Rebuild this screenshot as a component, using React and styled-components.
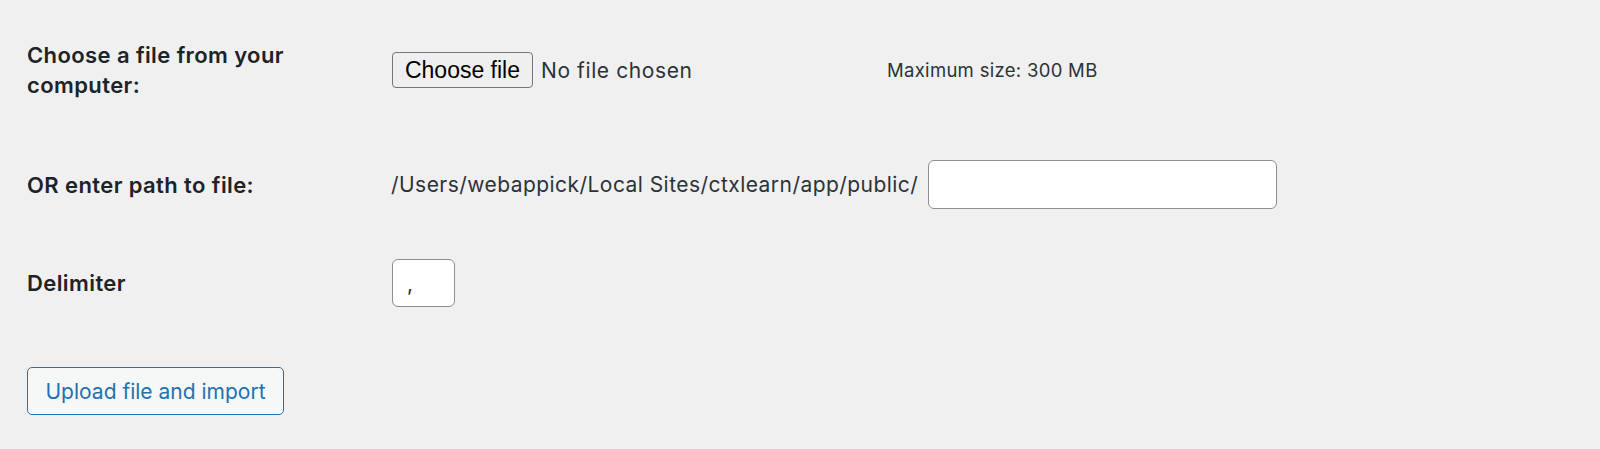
import styled, { createGlobalStyle } from 'styled-components';

const GlobalStyle = createGlobalStyle`
  html, body {
    margin: 0;
    padding: 0;
    background: #f0f0f1;
  }
  body {
    font-family: Inter, "Noto Sans", sans-serif;
    color: #3c434a;
  }
`;

const Form = styled.form`
  display: flex;
  flex-direction: column;
  padding: 40px 27px 0;
`;

const Row = styled.div`
  display: grid;
  grid-template-columns: 364px 1fr;
  align-items: center;
  height: ${(p) => p.height}px;
  margin-bottom: ${(p) => p.gap}px;
`;

const Label = styled.label`
  font-size: 22px;
  font-weight: 600;
  letter-spacing: 0.4px;
  line-height: 30px;
  color: #1d2327;
  width: 300px;
`;

const Field = styled.div`
  display: flex;
  align-items: center;
`;

const FilePicker = styled.div`
  display: flex;
  align-items: center;
  gap: 8px;
  width: 495px;
  padding-left: 1px;
`;

const NativeButton = styled.button`
  height: 36px;
  width: 141px;
  padding: 0;
  border: 1px solid #767676;
  border-radius: 4px;
  background: #efefef;
  color: #000;
  font-family: "Liberation Sans", Arial, sans-serif;
  font-size: 23px;
`;

const NoFile = styled.span`
  font-size: 21px;
  letter-spacing: 0.6px;
  color: #2c3338;
`;

const Description = styled.span`
  font-size: 18.5px;
  letter-spacing: 0.3px;
  color: #2c3338;
`;

const PathText = styled.span`
  font-size: 21px;
  letter-spacing: 0.45px;
  color: #2c3338;
  margin-right: 9px;
`;

const TextInput = styled.input`
  box-sizing: border-box;
  width: ${(p) => p.width}px;
  height: ${(p) => p.tall}px;
  border: 1px solid #8c8f94;
  border-radius: 6px;
  background: #fff;
  padding: 0 14px;
  font-family: Inter, sans-serif;
  font-size: 21px;
  color: #2c3338;
  margin-left: 1px;
`;

const UploadButton = styled.button`
  align-self: flex-start;
  box-sizing: border-box;
  height: 48px;
  width: 257px;
  padding: 0;
  border: 1px solid #2271b1;
  border-radius: 5px;
  background: #f6f7f7;
  color: #2271b1;
  font-family: Inter, sans-serif;
  font-size: 21px;
`;

export default function App() {
  return (
    <>
      <GlobalStyle />
      <Form onSubmit={(e) => e.preventDefault()}>
        <Row height={60} gap={60}>
          <Label>Choose a file from your computer:</Label>
          <Field>
            <FilePicker>
              <NativeButton type="button">Choose file</NativeButton>
              <NoFile>No file chosen</NoFile>
            </FilePicker>
            <Description>Maximum size: 300 MB</Description>
          </Field>
        </Row>
        <Row height={49} gap={50}>
          <Label>OR enter path to file:</Label>
          <Field>
            <PathText>/Users/webappick/Local Sites/ctxlearn/app/public/</PathText>
            <TextInput width={349} tall={49} />
          </Field>
        </Row>
        <Row height={48} gap={60}>
          <Label>Delimiter</Label>
          <Field>
            <TextInput width={63} tall={48} defaultValue="," />
          </Field>
        </Row>
        <UploadButton type="submit">Upload file and import</UploadButton>
      </Form>
    </>
  );
}
